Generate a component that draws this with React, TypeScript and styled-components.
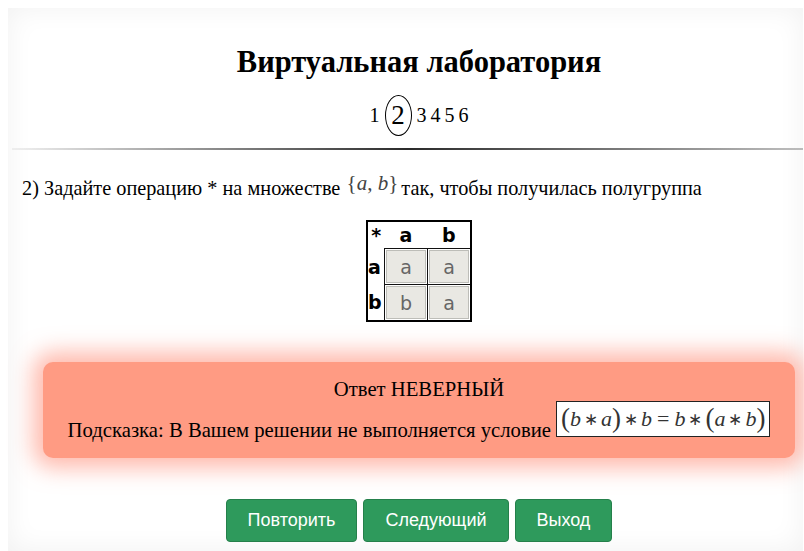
import React from "react";
import styled, { createGlobalStyle } from "styled-components";

const Global = createGlobalStyle`
  html, body { margin: 0; padding: 0; background: #fff; }
  body { font-family: "Liberation Serif", "Times New Roman", serif; color: #000; }
`;

const Page = styled.div`
  padding: 8px 1px 0 8px;
  height: 551px;
  box-sizing: border-box;
  overflow: hidden;
`;

const Sheet = styled.div`
  height: 100%;
  background: #fff;
  box-shadow: inset 0 0 28px rgba(0, 0, 0, 0.06);
  display: flex;
  flex-direction: column;
`;

const Header = styled.header`
  padding: 37px 0 0 27px;
  display: flex;
  flex-direction: column;
  align-items: center;
`;

const Title = styled.h1`
  margin: 0;
  font-size: 30.5px;
  line-height: 34px;
  font-weight: bold;
`;

const Steps = styled.nav`
  margin-top: 16px;
  height: 40px;
  display: flex;
  align-items: center;
  gap: 4px;
  font-size: 20px;
`;

const Step = styled.span<{ $active?: boolean }>`
  display: inline-flex;
  align-items: center;
  justify-content: center;
  ${(p) =>
    p.$active &&
    `
    width: 25px;
    height: 39px;
    border: 1px solid #000;
    border-radius: 50%;
    font-size: 27px;
    margin: 0 1px;
  `}
`;

const Divider = styled.hr`
  margin: 13px 0 0 4px;
  border: 0;
  height: 2px;
  background: linear-gradient(to right, rgba(0,0,0,0.05), #2a2a2a 50%, rgba(0,0,0,0.25));
`;

const Question = styled.p`
  margin: 27px 0 0 14px;
  font-size: 20.3px;
  line-height: 23px;
`;

const MathSet = styled.span`
  font-family: "Liberation Serif", serif;
  font-size: 21px;
  color: #444;
  position: relative;
  top: -5px;
  margin: 0 3px 0 1px;
  i { font-style: italic; }
`;

const TableWrap = styled.div`
  margin-top: 20px;
  padding-left: 27px;
  display: flex;
  justify-content: center;
`;

const OpTable = styled.table`
  border: 2px solid #000;
  border-collapse: collapse;
  font-family: "DejaVu Sans", Verdana, sans-serif;
`;

const HeadCell = styled.th<{ $w?: number }>`
  font-size: 19px;
  font-weight: bold;
  padding: 0;
  height: 26px;
  width: ${(p) => p.$w ?? 42}px;
  text-align: center;
  vertical-align: middle;
`;

const RowHead = styled.th`
  font-size: 19px;
  font-weight: bold;
  padding: 0;
  text-align: left;
  width: 16px;
`;

const Cell = styled.td`
  border: 1px solid #111;
  padding: 1px;
`;

const CellButton = styled.button`
  display: block;
  width: 40px;
  height: 33px;
  margin: 0;
  padding: 0;
  background: #e9e8e3;
  border: 1px solid #bdbdb8;
  color: #666;
  font-family: "DejaVu Sans", Verdana, sans-serif;
  font-size: 19px;
  cursor: pointer;
`;

const Alert = styled.div`
  margin: 40px 8px 0 35px;
  padding: 15px 16px 21px;
  background: #ff9b83;
  border-radius: 10px;
  box-shadow: 0 0 22px 10px rgba(255, 130, 105, 0.55);
  text-align: center;
  font-size: 20.7px;
`;

const AlertTitle = styled.div`
  line-height: 24px;
`;

const Hint = styled.div`
  display: flex;
  justify-content: center;
  align-items: flex-end;
  gap: 5px;
`;

const HintText = styled.span`
  line-height: 20px;
  position: relative;
  top: 3px;
`;

const Formula = styled.span`
  display: inline-block;
  box-sizing: border-box;
  height: 36px;
  line-height: 33px;
  padding: 0 4px;
  background: #fff;
  border: 1.5px solid #222;
  font-family: "Liberation Serif", serif;
  font-size: 22px;
  color: #333;
  white-space: nowrap;
  i { font-style: italic; }
`;

const Paren = styled.span`
  font-size: 27px;
  vertical-align: -1px;
`;

const Op = styled.span<{ $wide?: boolean }>`
  display: inline-block;
  font-size: ${(p) => (p.$wide ? 22 : 17)}px;
  margin: 0 ${(p) => (p.$wide ? 5 : 3)}px;
  vertical-align: ${(p) => (p.$wide ? 0 : 1)}px;
`;

const Actions = styled.div`
  margin-top: 41px;
  padding-left: 27px;
  display: flex;
  justify-content: center;
  gap: 6px;
`;

const ActionButton = styled.button`
  height: 43px;
  padding: 0 21px;
  background: #2e9a5c;
  border: 1px solid #25804b;
  border-radius: 4px;
  color: #fff;
  font-family: "Liberation Sans", Arial, sans-serif;
  font-size: 18px;
  cursor: pointer;
`;

const table = [
  ["a", "a", "a"],
  ["b", "b", "a"],
];

export default function App() {
  return (
    <>
      <Global />
      <Page>
        <Sheet>
          <Header>
            <Title>Виртуальная лаборатория</Title>
            <Steps>
              {[1, 2, 3, 4, 5, 6].map((n) => (
                <Step key={n} $active={n === 2}>
                  {n}
                </Step>
              ))}
            </Steps>
          </Header>
          <Divider />
          <Question>
            2) Задайте операцию * на множестве
            <MathSet>
              {" {"}
              <i>a</i>, <i>b</i>
              {"}"}
            </MathSet>
            так, чтобы получилась полугруппа
          </Question>
          <TableWrap>
            <OpTable>
              <thead>
                <tr>
                  <HeadCell $w={16}>*</HeadCell>
                  <HeadCell>a</HeadCell>
                  <HeadCell>b</HeadCell>
                </tr>
              </thead>
              <tbody>
                {table.map(([head, x, y]) => (
                  <tr key={head}>
                    <RowHead>{head}</RowHead>
                    <Cell>
                      <CellButton>{x}</CellButton>
                    </Cell>
                    <Cell>
                      <CellButton>{y}</CellButton>
                    </Cell>
                  </tr>
                ))}
              </tbody>
            </OpTable>
          </TableWrap>
          <Alert>
            <AlertTitle>Ответ НЕВЕРНЫЙ</AlertTitle>
            <Hint>
              <HintText>Подсказка: В Вашем решении не выполняется условие</HintText>
              <Formula>
                <Paren>(</Paren>
                <i>b</i>
                <Op>∗</Op>
                <i>a</i>
                <Paren>)</Paren>
                <Op>∗</Op>
                <i>b</i>
                <Op $wide>=</Op>
                <i>b</i>
                <Op>∗</Op>
                <Paren>(</Paren>
                <i>a</i>
                <Op>∗</Op>
                <i>b</i>
                <Paren>)</Paren>
              </Formula>
            </Hint>
          </Alert>
          <Actions>
            <ActionButton>Повторить</ActionButton>
            <ActionButton>Следующий</ActionButton>
            <ActionButton>Выход</ActionButton>
          </Actions>
        </Sheet>
      </Page>
    </>
  );
}
